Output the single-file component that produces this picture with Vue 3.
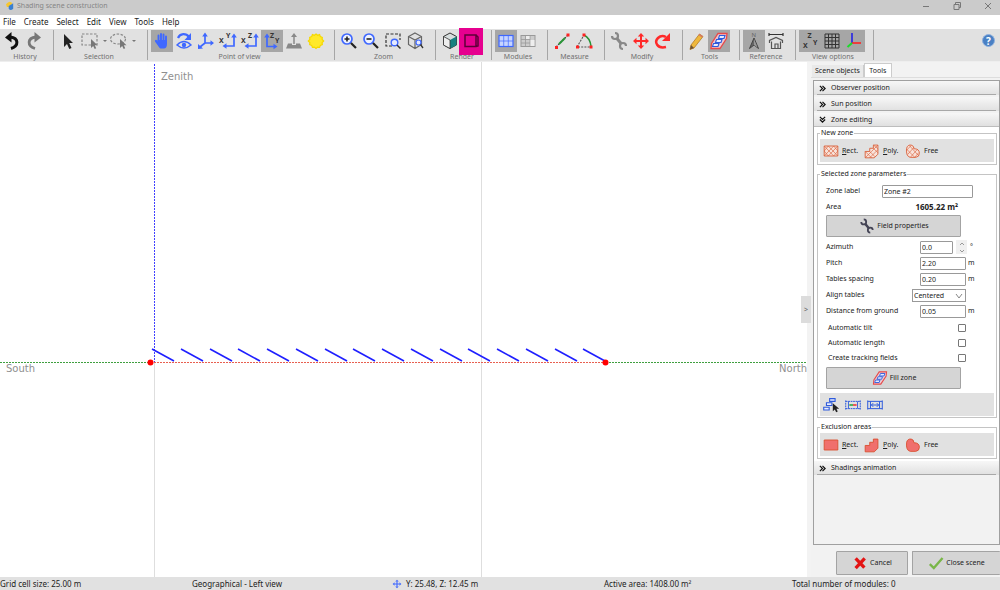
<script setup>
import { ref } from 'vue'

const blue = '#3f68ff'
const navy = '#2f5bdc'
const brick = '#d9603a'
const label = (x, y, t) => `<text x="${x}" y="${y}" font-size="7" font-weight="700" fill="#333" font-family="Noto Sans, sans-serif">${t}</text>`

const icons = {
  undo: '<path d="M10 18.500C18 16 18 8 9 7" fill="none" stroke="#111" stroke-width="3"/><path d="M10.500 2L4 7.500l6.500 5z" fill="#111"/>',
  redo: '<path d="M12 18.500C4 16 4 8 13 7" fill="none" stroke="#777" stroke-width="2.800"/><path d="M11.500 2L18 7.500l-6.500 5z" fill="#777"/>',
  cursor: '<path d="M7 4v13l3-3 2.300 5 2.200-1-2.300-5H16z" fill="#222"/>',
  rectSel: '<path d="M3 4h15v11H3z" fill="none" stroke="#888" stroke-width="1.200" stroke-dasharray="2.500 1.500"/><path d="M12 9v9l2.200-2 1.500 3 1.500-.8-1.400-3H18.500z" fill="#777"/>',
  lasso: '<ellipse cx="10" cy="9" rx="7.500" ry="5" fill="none" stroke="#888" stroke-width="1.200" stroke-dasharray="2.500 1.500"/><path d="M12 9v9l2.200-2 1.500 3 1.500-.8-1.400-3H18.500z" fill="#777"/>',
  hand: `<g stroke="${blue}" stroke-linecap="round" fill="none"><path d="M7.500 11V5.500M10 10V4M12.500 10V4.500M15 11V6.500" stroke-width="1.900"/><path d="M5 11l3 4" stroke-width="2.200"/></g><path d="M6.600 10H16v4c0 3-1.500 4.500-3 4.500H9.500C8 18 6.600 15 6.600 13z" fill="${blue}"/>`,
  eye: `<path d="M4 15q7-7 14 0q-7 6-14 0z" fill="none" stroke="${blue}" stroke-width="1.400"/><circle cx="11" cy="15" r="2.200" fill="${blue}"/><path d="M5 8C7 3 13 3 16 7" fill="none" stroke="${blue}" stroke-width="2.200"/><path d="M18 3v7h-6.500z" fill="${blue}"/>`,
  axes: `<path d="M10 13V5M10 13h8M10 13l-5 4" fill="none" stroke="${blue}" stroke-width="1.700"/><path d="M7.200 6.500L10 2.500l2.800 4zM15.500 10.200L19 13l-3.500 2.800zM3 19v-5L8 18.500z" fill="${blue}"/>`,
  xy: `<path d="M17 7v9H8" fill="none" stroke="${blue}" stroke-width="1.700"/><path d="M14.200 7.500L17 3.500l2.800 4zM9.500 13.200L5.500 16l4 2.800z" fill="${blue}"/>${label(2, 13, 'X')}${label(9, 8, 'Y')}`,
  xz: `<path d="M17 7v9H8" fill="none" stroke="${blue}" stroke-width="1.700"/><path d="M14.200 7.500L17 3.500l2.800 4zM9.500 13.200L5.500 16l4 2.800z" fill="${blue}"/>${label(2, 13, 'X')}${label(9, 8, 'Z')}`,
  zy: `<path d="M6 7v9.500h8" fill="none" stroke="${blue}" stroke-width="1.700"/><path d="M3.200 7.500L6 3.500l2.800 4zM12.500 13.700l4 2.800-4 2.800z" fill="${blue}"/>${label(9, 8, 'Z')}${label(14, 13, 'Y')}`,
  upward: '<path d="M11 14V6" stroke="#888" stroke-width="1.500"/><path d="M8 7l3-4 3 4zM5 13.500h4v1.500h4v-1.500h4l2 5H3z" fill="#888"/>',
  sun: '<path d="M11 4l1.600 1.300 2-.7.700 2 2 .7-.2 2.100 1.600 1.600-1.600 1.600.2 2.100-2 .7-.7 2-2-.3L11 18.500l-1.600-1.400-2 .3-.7-2-2-.7.200-2.100L3.300 11l1.600-1.600-.2-2.100 2-.7.700-2 2 .7z" fill="#ffe92a" stroke="#f5d800" stroke-width="1.200"/>',
  zoomIn: `<circle cx="9" cy="9" r="5" fill="#eef2ff" stroke="${blue}" stroke-width="1.700"/><path d="M13 13l5 5" stroke="#222" stroke-width="2.200"/><path d="M6.500 9h5M9 6.500v5" stroke="#222" stroke-width="1.600"/>`,
  zoomOut: `<circle cx="9" cy="9" r="5" fill="#eef2ff" stroke="${blue}" stroke-width="1.700"/><path d="M13 13l5 5" stroke="#222" stroke-width="2.200"/><path d="M6.500 9h5" stroke="#222" stroke-width="1.600"/>`,
  zoomRect: `<path d="M10 16H4V4h14v6" fill="none" stroke="#333" stroke-width="1.200" stroke-dasharray="3 1.500"/><circle cx="12.500" cy="12.500" r="3.300" fill="#e4eaff" stroke="${blue}" stroke-width="1.400"/><path d="M15 15l3.500 3.500" stroke="#333" stroke-width="1.500"/>`,
  zoomBox: `<path d="M11 3l6.500 3.500v8L11 18.500l-6.500-4v-8zM4.500 6.500L11 10l6.500-3.500M11 10v8.500" fill="none" stroke="#666" stroke-width="1.200"/><circle cx="14.500" cy="12.500" r="2.500" fill="#e4eaff" stroke="${blue}" stroke-width="1.200"/><path d="M16.500 14.500l2.500 3.500" stroke="#333" stroke-width="1.300"/>`,
  cube: '<path d="M11 3l6.500 3.500v8.500L11 18.500l-6.500-3.500V6.500z" fill="#d7dede" stroke="#333" stroke-width="1"/><path d="M11 10l6.500-3.500v8.500L11 18.500z" fill="#168080"/><path d="M11 10v8.500L4.500 15V6.500z" fill="#eee" stroke="#333" stroke-width=".8"/>',
  wire: '<path d="M5 5h11v11.500H5zM16 5l2 2v9l-2 .5" fill="none" stroke="#5d0038" stroke-width="1.500"/>',
  moduleGrid: `<rect x="4" y="5.500" width="14" height="11" fill="#c7d5ff" stroke="${blue}" stroke-width="1.200"/><path d="M4 11h14M8.700 5.500v11M13.300 5.500v11" stroke="${blue}" stroke-width=".7"/>`,
  moduleGray: '<rect x="4" y="5.500" width="14" height="11" fill="#ccc" stroke="#999"/><path d="M4 9.500h9M4 13h9M8.500 5.500v11M13 5.500v11" stroke="#999" stroke-width=".8"/><path d="M9 6h3.500v3H9zM13.500 10h4v6h-4z" fill="#eee"/>',
  measure: '<path d="M5 17L17 5" stroke="#444" stroke-width="1.200" stroke-dasharray="2 1"/><path d="M8 14l6-6" stroke="#289437" stroke-width="2"/><path d="M4 16h3v3H4zM15.500 3.500h3v3h-3z" fill="#f22"/>',
  angle: '<path d="M4 17L11 5M5 17h13" fill="none" stroke="#555" stroke-width="1.100" stroke-dasharray="2 1.200"/><path d="M11 5q6 3 7 11" fill="none" stroke="#289437" stroke-width="1.500"/><path d="M9.500 3.500h3v3h-3zM3 15.500h3v3H3zM16.500 15.500h3v3h-3z" fill="#f22"/>',
  wrench: '<path d="M8.500 8l5 6" stroke="#888" stroke-width="3"/><path d="M7 3a3 3 0 1 1-3 3M18 16a3 3 0 1 0-3 3" fill="none" stroke="#888" stroke-width="2.200"/>',
  move: '<path d="M11 6v10M6 11h10" stroke="#ff2a2a" stroke-width="2"/><path d="M7.800 6.500L11 3l3.200 3.500zM7.800 15.500L11 19l3.200-3.500zM6.500 7.800L3 11l3.500 3.200zM15.500 7.800L19 11l-3.500 3.200z" fill="#ff2a2a"/>',
  rotate: '<path d="M14 17C5 19 2 12 6 8q3.500-3.500 8-1" fill="none" stroke="#ff2a2a" stroke-width="2.500"/><path d="M18 3v8h-8z" fill="#ff2a2a"/>',
  pencil: '<path d="M5 15L13.500 4l3.500 2.500L8 18l-4 1.500z" fill="#efb83c" stroke="#b47c25" stroke-width=".8"/><path d="M5 15l3 3-4 1.500z" fill="#6d5135"/><path d="M12.500 5l3.500 2.600 1-1.200-3.400-2.600z" fill="#d57765"/>',
  fill: `<path d="M10 3.500h9l-.5 5L12 18.500H3l.5-5z" fill="#ecc9d2" stroke="#e64a4a" stroke-width="1.300"/><g fill="#e8edff" stroke="${navy}" stroke-width="1.100"><path d="M11.500 5.500h5.500l-1 3h-5.500zM8.500 9.500H14l-1 3H7.500zM5.500 13.500H11l-1 3H4.500z"/></g>`,
  north: '<path d="M11 8l4.500 10.500L11 15l-4.500 3.500z" fill="#666" stroke="#444"/><path d="M11 9v6l3.500 2.500z" fill="#999"/><text x="8.500" y="7" font-size="6" fill="#666" font-family="Noto Sans, sans-serif">N</text>',
  house: '<path d="M4 4.500h14M4 3v3M18 3v3" fill="none" stroke="#333" stroke-width="1.200"/><path d="M4.500 13v-2.500L11 7.500l6.500 3V13M6.500 11.500v7h9v-7M10 18v-4h3v4" fill="none" stroke="#555" stroke-width="1.200"/>',
  xyz: label(8.5, 8, 'Z') + label(4, 18, 'X') + label(14, 15, 'Y'),
  grid: '<path d="M4 4h14v14H4zM7.500 4v14M11 4v14M14.500 4v14M4 7.500h14M4 11h14M4 14.500h14" fill="none" stroke="#333" stroke-width="1"/>',
  rgb: '<path d="M9 13V3" stroke="#2323e6" stroke-width="1.600"/><path d="M9 13h9" stroke="#f22" stroke-width="1.600"/><path d="M9 13l-4.500 4" stroke="#1bdc2b" stroke-width="2"/>',
  zoneRect: `<path d="M3.500 5.500h15v11h-15z" fill="#f8e2da" stroke="${brick}"/><path d="M3.500 5.500L14 16.500M3.500 16.500L14 5.500M8 5.500l10.500 11M8 16.500l10.500-11M3.500 11L8 16.500M3.500 11L8 5.500M18.500 11L14 16.500M18.500 11L14 5.500" fill="none" stroke="${brick}" stroke-width=".7"/>`,
  zonePoly: `<path d="M3.500 18.500v-7h5V8h4V4.500h5v10l-4 4z" fill="#f8e2da" stroke="${brick}"/><path d="M3.500 11.500l7 7M3.500 18.500l7-7L17.500 4.500M8.500 11.500l6 6M12.500 8l5 5M8.500 18.500l9-9M12.500 4.500l5 4" fill="none" stroke="${brick}" stroke-width=".7"/>`,
  zoneFree: `<path d="M4 8q1-4 5-3.500 3 .5 3 4 6 0 6 5 0 4-4 4.500H8q-5-1-4-10z" fill="#f8e2da" stroke="${brick}"/><path d="M4 9l9 9M7 5l10 11M5 15l7-8M8 18l8-9M4 10l5-5M13 18l4-5" fill="none" stroke="${brick}" stroke-width=".7"/>`,
  exRect: '<path d="M3.500 5.500h15v11h-15z" fill="#f06f6c" stroke="#d9502f"/>',
  exPoly: '<path d="M3.500 18.500v-7h5V8h4V4.500h5v10l-4 4z" fill="#f06f6c" stroke="#d9502f"/>',
  exFree: '<path d="M4 8q1-4 5-3.500 3 .5 3 4 6 0 6 5 0 4-4 4.500H8q-5-1-4-10z" fill="#f06f6c" stroke="#d9502f"/>',
  pick: `<g fill="#e9edff" stroke="${navy}" stroke-width="1.200"><path d="M9.500 4h6v3h-6zM6 8.500h6v3H6zM3 13.500h6v3H3z"/></g><path d="M13 9v9l2.200-2 1.500 3 1.700-.8-1.400-3H20z" fill="#222"/>`,
  gap: `<path d="M3 6v10M3 7h16M19 6v10M3 15h16" fill="none" stroke="${navy}" stroke-width="1.100" stroke-dasharray="2 .7"/><path d="M6 7v8M16 7v8" stroke="${navy}"/><path d="M7 11h4" stroke="#22a83a" stroke-width="1.700"/><path d="M11 11h4" stroke="#e33" stroke-width="1.700"/>`,
  span: `<path d="M3 6v10M3 7h16M19 6v10M3 15h16M6 7v8M16 7v8M7 11h8M9 9l-2 2 2 2M13 9l2 2-2 2" fill="none" stroke="${navy}" stroke-width="1.100"/>`,
  cancel: '<path d="M5 4.500l12 13M17.500 4.500L5 18" stroke="#e31414" stroke-width="4.500"/>',
  accept: '<path d="M2.500 12.500L8 18 20 4" fill="none" stroke="#79b648" stroke-width="3.200"/>',
}

const groups = [
  { name: 'History', w: 'w54', items: [{ i: 'undo', t: 'Undo' }, { i: 'redo', t: 'Redo' }] },
  { name: 'Selection', w: 'w94', items: [{ i: 'cursor', t: 'Select' }, { i: 'rectSel', t: 'Rectangle selection', drop: true }, { i: 'lasso', t: 'Lasso selection', drop: true }] },
  { name: 'Point of view', w: 'w187', items: [{ i: 'hand', t: 'Pan', on: true }, { i: 'eye', t: 'Orbit' }, { i: 'axes', t: 'Perspective' }, { i: 'xy', t: 'Top view' }, { i: 'xz', t: 'Front view' }, { i: 'zy', t: 'Side view', on: true }, { i: 'upward', t: 'From ground' }, { i: 'sun', t: 'Sun view' }] },
  { name: 'Zoom', w: 'w101', items: [{ i: 'zoomIn', t: 'Zoom in' }, { i: 'zoomOut', t: 'Zoom out' }, { i: 'zoomRect', t: 'Zoom to area' }, { i: 'zoomBox', t: 'Zoom to scene' }] },
  { name: 'Render', w: 'w56', items: [{ i: 'cube', t: 'Realistic' }, { i: 'wire', t: 'Wireframe', hot: true }] },
  { name: 'Modules', w: 'w56', items: [{ i: 'moduleGrid', t: 'Show modules', on: true }, { i: 'moduleGray', t: 'Module layout' }] },
  { name: 'Measure', w: 'w57', items: [{ i: 'measure', t: 'Distance' }, { i: 'angle', t: 'Angle' }] },
  { name: 'Modify', w: 'w78', items: [{ i: 'wrench', t: 'Edit' }, { i: 'move', t: 'Move' }, { i: 'rotate', t: 'Rotate' }] },
  { name: 'Tools', w: 'w57', items: [{ i: 'pencil', t: 'Draw' }, { i: 'fill', t: 'Zone tool', on: true }] },
  { name: 'Reference', w: 'w56', items: [{ i: 'north', t: 'North', on: true }, { i: 'house', t: 'Building' }] },
  { name: 'View options', w: 'w78', items: [{ i: 'xyz', t: 'Axis names', on: true }, { i: 'grid', t: 'Grid', on: true }, { i: 'rgb', t: 'Axes', on: true }] },
]

const menus = ['File', 'Create', 'Select', 'Edit', 'View', 'Tools', 'Help']
const shapes = [
  { key: 'Rect', head: 'R', tail: 'ect.' },
  { key: 'Poly', head: 'P', tail: 'oly.' },
  { key: 'Free', head: '', tail: 'Free' },
]
const zoneLabel = ref('Zone #2')
const azimuth = ref('0.0')
const pitch = ref('2.20')
const spacing = ref('0.20')
const align = ref('Centered')
const ground = ref('0.05')
const checks = ref([
  { id: 'tilt', text: 'Automatic tilt', on: false },
  { id: 'length', text: 'Automatic length', on: false },
  { id: 'tracking', text: 'Create tracking fields', on: false },
])
const tables = Array.from({ length: 16 }, (_, n) => 152 + Math.round(n * 28.75))
</script>

<template>
  <div class="window">
    <header class="title">
      <svg class="logo" viewBox="0 0 10 10"><path d="M0 3q4-5 7-1L5 6H1z" fill="#f6c62f" /><path d="M3 5l5-3v6q-3 3-5 0z" fill="#3a7fd0" /></svg>
      <span>Shading scene construction</span>
      <div class="wincontrols">
        <button aria-label="Minimize"><svg viewBox="0 0 10 10"><path d="M2 5.500h6" /></svg></button>
        <button aria-label="Restore"><svg viewBox="0 0 10 10"><path d="M2 3.500h5v5H2zM3.500 3.500v-2h5v5H7" /></svg></button>
        <button aria-label="Close"><svg viewBox="0 0 10 10"><path d="M2 2l6 6M8 2L2 8" /></svg></button>
      </div>
    </header>

    <nav class="menu"><button v-for="m in menus" :key="m">{{ m }}</button></nav>

    <div class="toolbar">
      <section v-for="g in groups" :key="g.name" class="group" :class="g.w">
        <div class="tools">
          <template v-for="b in g.items" :key="b.i">
            <button class="tool" :class="{ on: b.on, hot: b.hot }" :aria-label="b.t"><svg viewBox="0 0 22 22" v-html="icons[b.i]" /></button>
            <button v-if="b.drop" class="drop" :aria-label="b.t + ' options'"></button>
          </template>
        </div>
        <span class="caption">{{ g.name }}</span>
      </section>
      <button class="help" aria-label="Help">?</button>
    </div>

    <main class="body">
      <div class="canvas">
        <svg class="scene">
          <path d="M154.500 300V515M481.500 0V515" stroke="#dedede" />
          <path d="M154.500 2V300" stroke="#4040ff" stroke-dasharray="2 1" />
          <line x1="0" y1="300.500" x2="100%" y2="300.500" stroke="#3f9f3f" stroke-dasharray="2 1" />
          <path d="M151 300.500H605" stroke="#fff" />
          <path d="M151 300.500H605" stroke="#e86050" stroke-dasharray="2 1" />
          <line v-for="x in tables" :key="x" :x1="x" y1="287" :x2="x + 22" y2="299" stroke="#1f1fff" stroke-width="1.600" />
          <circle cx="150.500" cy="300.500" r="3" fill="#f00" />
          <circle cx="605.500" cy="300.500" r="3" fill="#f00" />
        </svg>
        <span class="axis zenith">Zenith</span>
        <span class="axis south">South</span>
        <span class="axis north">North</span>
        <button class="collapse" aria-label="Collapse panel">&gt;</button>
      </div>

      <aside class="side">
        <div class="tabs" role="tablist">
          <button role="tab" class="tab">Scene objects</button>
          <button role="tab" class="tab current" aria-selected="true">Tools</button>
        </div>
        <div class="panel">
          <button class="section ruled"><svg viewBox="0 0 8 8"><path d="M1 1l3 3-3 3M4 1l3 3-3 3" /></svg>Observer position</button>
          <button class="section ruled"><svg viewBox="0 0 8 8"><path d="M1 1l3 3-3 3M4 1l3 3-3 3" /></svg>Sun position</button>
          <button class="section"><svg viewBox="0 0 8 8"><path d="M1 1l3 3 3-3M1 4l3 3 3-3" /></svg>Zone editing</button>

          <div class="content">
            <fieldset>
              <legend>New zone</legend>
              <div class="strip">
                <button v-for="s in shapes" :key="s.key" class="shape"><svg viewBox="0 0 22 22" v-html="icons['zone' + s.key]" /><span><u>{{ s.head }}</u>{{ s.tail }}</span></button>
              </div>
            </fieldset>

            <fieldset class="params">
              <legend>Selected zone parameters</legend>
              <div class="row"><label for="zl">Zone label</label><input id="zl" v-model="zoneLabel" class="wide"></div>
              <div class="row short"><span>Area</span><b>1605.22 m²</b></div>
              <button class="big"><svg viewBox="0 0 22 22" v-html="icons.wrench.replaceAll('#888', '#445')" />Field properties</button>
              <div class="row">
                <label for="az">Azimuth</label><input id="az" v-model="azimuth" class="tiny">
                <span class="spin"><button aria-label="Increase"><svg viewBox="0 0 6 4"><path d="M1 3l2-2 2 2" /></svg></button><button aria-label="Decrease"><svg viewBox="0 0 6 4"><path d="M1 1l2 2 2-2" /></svg></button></span>
                <span class="unit degree">°</span>
              </div>
              <div class="row"><label for="pi">Pitch</label><input id="pi" v-model="pitch"><span class="unit">m</span></div>
              <div class="row"><label for="sp">Tables spacing</label><input id="sp" v-model="spacing"><span class="unit">m</span></div>
              <div class="row">
                <label for="al">Align tables</label>
                <span class="select"><select id="al" v-model="align"><option>Centered</option><option>Left</option><option>Right</option></select><svg viewBox="0 0 8 6"><path d="M1 1l3 4 3-4" /></svg></span>
                <span class="unit"></span>
              </div>
              <div class="row"><label for="gr">Distance from ground</label><input id="gr" v-model="ground"><span class="unit">m</span></div>
              <div class="checks">
                <div v-for="c in checks" :key="c.id" class="row check"><label :for="c.id">{{ c.text }}</label><input :id="c.id" v-model="c.on" type="checkbox"></div>
              </div>
              <button class="big"><svg viewBox="0 0 22 22" v-html="icons.fill" />Fill zone</button>
              <div class="strip edit">
                <button v-for="n in ['pick', 'gap', 'span']" :key="n" :aria-label="n"><svg viewBox="0 0 22 22" v-html="icons[n]" /></button>
              </div>
            </fieldset>

            <fieldset>
              <legend>Exclusion areas</legend>
              <div class="strip">
                <button v-for="s in shapes" :key="s.key" class="shape"><svg viewBox="0 0 22 22" v-html="icons['ex' + s.key]" /><span><u>{{ s.head }}</u>{{ s.tail }}</span></button>
              </div>
            </fieldset>
          </div>
          <button class="section ruled"><svg viewBox="0 0 8 8"><path d="M1 1l3 3-3 3M4 1l3 3-3 3" /></svg>Shadings animation</button>
        </div>
        <div class="actions">
          <button><svg viewBox="0 0 22 22" v-html="icons.cancel" />Cancel</button>
          <button class="accept"><svg viewBox="0 0 22 22" v-html="icons.accept" />Close scene</button>
        </div>
      </aside>
    </main>

    <footer class="status">
      <span>Grid cell size: 25.00 m</span>
      <span>Geographical - Left view</span>
      <span class="coords"><svg viewBox="0 0 22 22" v-html="icons.move.replaceAll('#ff2a2a', blue)" />Y: 25.48, Z: 12.45 m</span>
      <span>Active area: 1408.00 m²</span>
      <span>Total number of modules: 0</span>
    </footer>
  </div>
</template>

<style>
body { margin: 0; overflow: hidden; }
</style>

<style scoped>
.window {
  display: flex;
  flex-direction: column;
  height: 100vh;
  font-family: "Noto Sans", sans-serif;
  font-size: 7px;
  line-height: 10px;
  color: #222;
  background: #fff;
}
* { box-sizing: border-box; }
button, input, select {
  font: inherit;
  color: inherit;
  margin: 0;
  padding: 0;
  border: 0;
  background: none;
}
svg { display: block; flex: none; }

.title {
  display: flex;
  align-items: center;
  flex: 0 0 15px;
  padding: 0 7px 4px 6px;
  gap: 2px;
  background: #cbcbcb;
  color: #858585;
}
.logo { width: 9px; height: 10px; }
.wincontrols { display: flex; gap: 21px; margin-left: auto; }
.wincontrols svg { width: 10px; height: 10px; fill: none; stroke: #777; }

.menu { display: flex; flex: 0 0 14px; align-items: center; gap: 8px; padding-left: 3px; font-size: 8px; }

.toolbar { display: flex; flex: 0 0 33px; background: #e1e1e1; border-bottom: 1px solid #eee; }
.group { position: relative; display: flex; flex-direction: column; align-items: center; padding: 1px 4px 0 0; }
.group::after { content: ""; position: absolute; right: 0; top: 1px; bottom: 1px; width: 1px; background: #a6a6a6; }
.w54 { width: 54px; }
.w56 { width: 56px; }
.w57 { width: 57px; }
.w78 { width: 78px; }
.w94 { width: 94px; }
.w101 { width: 101px; }
.w187 { width: 187px; }
.tools { display: flex; align-self: flex-start; height: 22px; padding-left: 3px; }
.w54 .tools { padding-left: 1px; }
.tool { width: 22px; height: 22px; }
.tool svg { width: 22px; height: 22px; }
.on { background: #a6a6a6; }
.hot { position: relative; z-index: 1; width: 24px; height: 27px; margin: -2px -2px 0 -2px; padding: 2px 1px; background: #e6008f; }
.hot svg { margin: 0 0 3px; }
.drop { width: 7px; display: flex; align-items: center; justify-content: center; }
.drop::before { content: ""; border: 2px solid transparent; border-top-color: #777; border-bottom: 0; }
.caption { color: #707070; line-height: 9px; }
.help {
  width: 13px;
  height: 13px;
  margin: 5px 5px 0 auto;
  border-radius: 50%;
  background: #4a80c4;
  border: 1px solid #8fb0dd;
  color: #fff;
  font-size: 10px;
  font-weight: 700;
  line-height: 10px;
}

.body { display: flex; flex: 1; min-height: 0; }
.canvas { position: relative; flex: 1; border-right: 4px solid #f3f3f3; }
.scene { width: 100%; height: 100%; }
.axis { position: absolute; font-family: "DejaVu Sans", sans-serif; font-size: 10px; line-height: 14px; color: #8f8f8f; }
.zenith { left: 161px; top: 8px; }
.south { left: 6px; top: 300px; }
.north { right: 0; top: 300px; }
.collapse { position: absolute; right: -4px; top: 234px; width: 10px; height: 27px; background: #dcdcdc; color: #666; }

.side { display: flex; flex-direction: column; flex: 0 0 189px; background: #f2f2f2; }
.tabs { display: flex; height: 16px; align-items: flex-end; padding-left: 1px; border-bottom: 1px solid #ddd; }
.tab { height: 12px; padding: 0 3px; background: #e9e9e9; border-right: 1px solid #ccc; }
.tab.current { height: 14px; width: 28px; background: #fff; border: 1px solid #ccc; border-bottom: 0; }
.panel { flex: 1; display: flex; flex-direction: column; margin: 2px 0 5px 2px; border: 1px solid #a0a0a0; }
.section {
  position: relative;
  display: flex;
  align-items: center;
  gap: 5px;
  height: 14px;
  padding-left: 5px;
  background: linear-gradient(#f7f7f7, #e0e0e0);
  border-bottom: 1px solid #bdbdbd;
  text-align: left;
}
.ruled { margin-bottom: 2px; border: 0; }
.ruled::after { content: ""; position: absolute; left: 3px; right: 3px; bottom: 0; height: 1px; background: #a8a8a8; }
.section svg { width: 7px; height: 7px; fill: none; stroke: #111; stroke-width: 1.4; }
.content { display: flex; flex-direction: column; gap: 4px; padding: 1px 2px 2px 3px; background: #fff; }
fieldset { min-width: 0; margin: 0; padding: 1px 2px 2px; border: 1px solid #c4c4c4; }
legend { padding: 0 1px; margin: 0; line-height: 10px; }
.strip { display: flex; height: 23px; align-items: center; gap: 2px; padding-left: 1px; background: #e1e1e1; }
.strip svg { width: 20px; height: 20px; }
.shape { display: flex; align-items: center; gap: 1px; min-width: 39px; }
.params { padding-top: 4px; padding-bottom: 1px; }
.row { display: flex; align-items: center; height: 16px; padding-left: 6px; }
.row label, .row > span:first-child { flex: 1; white-space: nowrap; }
.row input:not([type="checkbox"]) { width: 46px; height: 13px; padding: 0 1px; border: 1px solid #999; border-radius: 1px; background: #fff; }
.row input.wide { width: 91px; margin-right: 21px; }
.row input.tiny { width: 33px; }
.row.short { height: 15px; }
.row b { margin-right: 36px; font-size: 8px; }
.unit { width: 28px; padding-left: 2px; height: 10px; }
.spin { display: flex; flex-direction: column; width: 11px; margin: 0 1px 0 3px; background: #f0f0f0; }
.unit.degree { width: 26px; }
.spin button { height: 7px; display: flex; align-items: center; justify-content: center; }
.spin svg { width: 6px; height: 4px; fill: none; stroke: #999; }
.select { position: relative; flex: none; width: 54px; height: 13px; border: 1px solid #999; }
.select select { width: 100%; height: 11px; appearance: none; padding-left: 1px; display: block; line-height: 11px; }
.select svg { position: absolute; right: 2px; top: 3px; width: 8px; height: 6px; fill: none; stroke: #888; pointer-events: none; }
.big {
  display: flex;
  align-items: center;
  justify-content: center;
  gap: 1px;
  width: 135px;
  height: 22px;
  margin: 1px 0 2px 6px;
  background: #d5d5d5;
  border: 1px solid #a3a3a3;
  border-radius: 1px;
}
.big svg { width: 18px; height: 18px; }
.checks { padding: 1px 0; }
.check { height: 15px; padding-left: 8px; }
.check input { appearance: none; width: 8px; height: 8px; margin-right: 28px; border: 1px solid #777; border-radius: 1px; background: #fff; }
.check input:checked { background: #3f68ff; }
.edit { height: 23px; margin-top: 4px; }

.actions { display: flex; justify-content: flex-end; gap: 4px; height: 27px; padding: 1px 0 2px; }
.actions button { display: flex; align-items: center; justify-content: center; gap: 2px; width: 72px; background: #d5d5d5; border: 1px solid #a3a3a3; border-radius: 1px; }
.actions .accept { width: 88px; border-right: 0; }
.actions svg { width: 16px; height: 16px; }

.status { display: grid; grid-template-columns: 192fr 199fr 213fr 188fr 208fr; align-items: center; flex: 0 0 13px; background: #e1e1e1; font-size: 8px; line-height: 12px; white-space: nowrap; }
.coords { display: flex; align-items: center; gap: 3px; }
.coords svg { width: 12px; height: 12px; }
</style>
